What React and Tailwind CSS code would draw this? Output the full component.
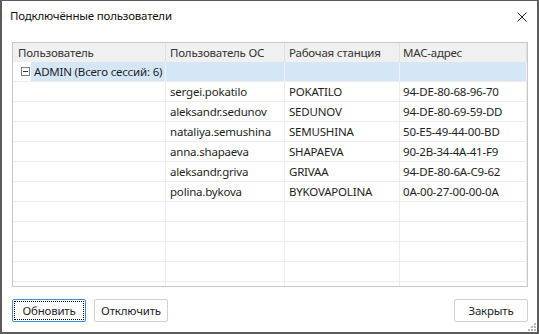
import React from "react";

const font = { fontFamily: '"Noto Sans", "Open Sans", sans-serif' };

const users = [
  ["sergei.pokatilo", "POKATILO", "94-DE-80-68-96-70"],
  ["aleksandr.sedunov", "SEDUNOV", "94-DE-80-69-59-DD"],
  ["nataliya.semushina", "SEMUSHINA", "50-E5-49-44-00-BD"],
  ["anna.shapaeva", "SHAPAEVA", "90-2B-34-4A-41-F9"],
  ["aleksandr.griva", "GRIVAA", "94-DE-80-6A-C9-62"],
  ["polina.bykova", "BYKOVAPOLINA", "0A-00-27-00-00-0A"],
];

const cols = ["w-[153px] pl-[5px]", "w-[119px] pl-[4px]", "w-[115px] pl-[4px]", "w-[127px] pl-[3px]"];

const Row = ({ cells }) => (
  <div className="flex h-[20px] shrink-0 border-b border-[#ececec]">
    {cols.map((c, i) => (
      <div key={i} className={`${c} shrink-0 border-r border-[#ececec] flex items-center whitespace-nowrap text-[#1e1e1e]`}>
        {cells ? cells[i] : ""}
      </div>
    ))}
  </div>
);

const Button = ({ children, focused }) => (
  <button
    className={`relative w-[74px] h-[23px] rounded-[2px] border bg-white text-[11.5px] tracking-[-0.2px] text-[#1f1f1f] flex items-center justify-center ${
      focused ? "border-[#3b8fd9]" : "border-[#d0d0d0]"
    }`}
  >
    {focused && <span className="absolute inset-[1px] border border-dotted border-black" />}
    <span className="relative">{children}</span>
  </button>
);

export default function App() {
  const empty = Array.from({ length: 5 });

  return (
    <div
      style={font}
      className="relative w-[539px] h-[334px] bg-white border-t border-l-2 border-r-2 border-b-2 border-[#5b5b5b] flex flex-col text-[11.5px] tracking-[-0.2px] overflow-hidden"
    >
      {/* Title bar */}
      <div className="h-[30px] shrink-0 flex items-center justify-between pl-[8px] pr-[10px]">
        <span className="text-[#111]">Подключённые пользователи</span>
        <svg width="10" height="10" viewBox="0 0 10 10" className="mt-[1px]">
          <path d="M0.5 0.5 L9.5 9.5 M9.5 0.5 L0.5 9.5" stroke="#222" strokeWidth="1" />
        </svg>
      </div>

      {/* Grid */}
      <div className="mt-[11px] ml-[10px] mr-[9px] h-[245px] shrink-0 border border-[#c9c9c9] flex flex-col overflow-hidden">
        <div className="flex h-[19px] shrink-0 bg-[#f0f0f0] text-[#333]">
          {["Пользователь", "Пользователь ОС", "Рабочая станция", "MAC-адрес"].map((h, i) => (
            <div key={h} className={`${cols[i]} shrink-0 border-r border-[#e0e0e0] flex items-center whitespace-nowrap`}>
              {h}
            </div>
          ))}
        </div>

        {/* Group row */}
        <div className="flex h-[20px] shrink-0 border-b border-[#ececec]">
          <div className="w-[153px] shrink-0 flex border-r border-[#eef4fa]">
            <div className="w-[18px] shrink-0 bg-white flex items-center pl-[8px]">
              <div className="w-[9px] h-[9px] border border-[#7a7a7a] flex items-center justify-center">
                <div className="w-[5px] h-px bg-[#333]" />
              </div>
            </div>
            <div className="flex-1 bg-[#d5e7f6] flex items-center pl-[3px] whitespace-nowrap text-[#1e1e1e]">
              ADMIN (Всего сессий: 6)
            </div>
          </div>
          <div className="w-[119px] shrink-0 bg-[#d5e7f6] border-r border-[#eef4fa]" />
          <div className="w-[115px] shrink-0 bg-[#d5e7f6] border-r border-[#eef4fa]" />
          <div className="w-[127px] shrink-0 bg-[#d5e7f6] border-r border-[#eef4fa]" />
        </div>

        {users.map((u) => (
          <Row key={u[0]} cells={["", ...u]} />
        ))}
        {empty.map((_, i) => (
          <Row key={i} />
        ))}
      </div>

      {/* Buttons */}
      <div className="mt-[12px] ml-[10px] mr-[9px] flex items-center">
        <div className="flex gap-[8px]">
          <Button focused>Обновить</Button>
          <Button>Отключить</Button>
        </div>
        <div className="ml-auto">
          <Button>Закрыть</Button>
        </div>
      </div>

      {/* Resize grip */}
      <svg width="9" height="9" viewBox="0 0 9 9" className="absolute right-[1px] bottom-[1px]">
        {[
          [7, 1], [4, 4], [7, 4], [1, 7], [4, 7], [7, 7],
        ].map(([x, y]) => (
          <rect key={`${x}-${y}`} x={x} y={y} width="2" height="2" fill="#b5b5b5" />
        ))}
      </svg>
    </div>
  );
}
